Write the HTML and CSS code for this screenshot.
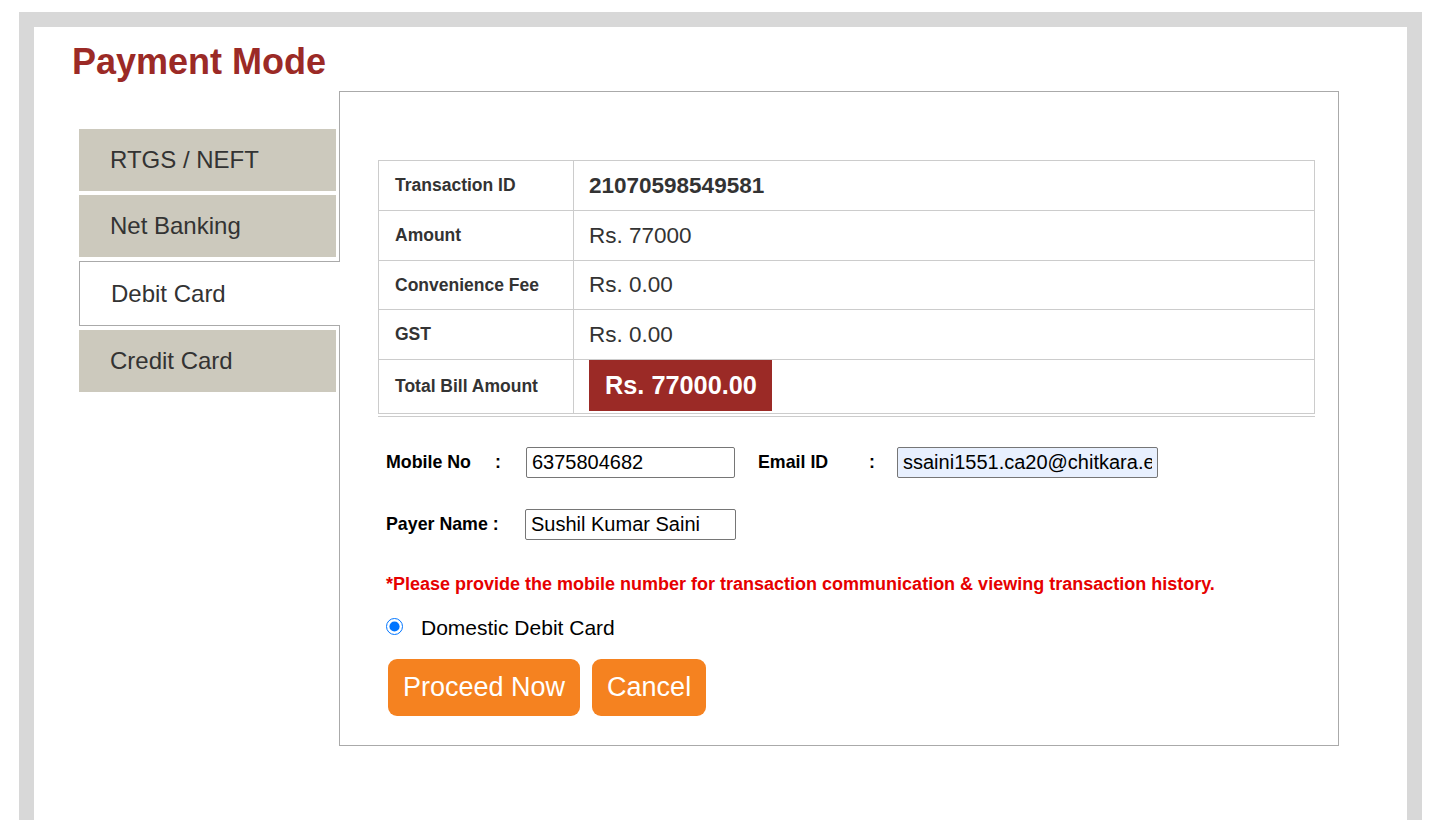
FILE: index.html
```html
<!DOCTYPE html>
<html>
<head>
<meta charset="utf-8">
<title>Payment Mode</title>
<link rel="stylesheet" href="styles.css">
</head>
<body>
<div class="page">
  <div class="frame">
    <h1 class="title">Payment Mode</h1>
    <div class="layout">
      <ul class="tabs">
        <li class="tab">RTGS / NEFT</li>
        <li class="tab">Net Banking</li>
        <li class="tab tab-active">Debit Card</li>
        <li class="tab">Credit Card</li>
      </ul>
      <div class="panel">
        <table class="bill">
          <tr class="r1"><td class="lbl">Transaction ID</td><td class="val val-bold">21070598549581</td></tr>
          <tr class="r2"><td class="lbl">Amount</td><td class="val">Rs. 77000</td></tr>
          <tr class="r3"><td class="lbl">Convenience Fee</td><td class="val">Rs. 0.00</td></tr>
          <tr class="r4"><td class="lbl">GST</td><td class="val">Rs. 0.00</td></tr>
          <tr class="r5"><td class="lbl">Total Bill Amount</td><td class="val val-total"><span class="total">Rs. 77000.00</span></td></tr>
        </table>
        <div class="form">
          <div class="frow">
            <span class="flabel w-mobile">Mobile No</span>
            <span class="colon w-c1">:</span>
            <input class="finput in-mobile" type="text" value="6375804682">
            <span class="flabel w-email">Email ID</span>
            <span class="colon w-c2">:</span>
            <input class="finput in-email" type="text" value="ssaini1551.ca20@chitkara.edu.in">
          </div>
          <div class="frow">
            <span class="flabel w-payer">Payer Name :</span>
            <input class="finput in-payer" type="text" value="Sushil Kumar Saini">
          </div>
          <p class="note">*Please provide the mobile number for transaction communication &amp; viewing transaction history.</p>
          <label class="radio-row"><input class="radio" type="radio" name="card" checked> <span>Domestic Debit Card</span></label>
          <div class="actions">
            <button class="btn" type="button">Proceed Now</button>
            <button class="btn" type="button">Cancel</button>
          </div>
        </div>
      </div>
    </div>
  </div>
</div>
</body>
</html>
```
FILE: styles.css
```css
html, body {
  margin: 0;
  padding: 0;
  background: #fff;
  overflow: hidden;
}
body {
  font-family: "Liberation Sans", Arial, sans-serif;
  color: #333;
}
.page {
  padding: 12px 18px 0 19px;
}
.frame {
  border: 15px solid #d8d8d8;
  border-bottom: 0;
  background: #fff;
  height: 808px;
  box-sizing: border-box;
  padding: 17px 0 0 38px;
}
.title {
  margin: 0;
  font-size: 36px;
  line-height: 36px;
  font-weight: bold;
  color: #9b2a26;
}
.layout {
  display: flex;
  margin-top: 11px;
  margin-left: 7px;
}
.tabs {
  list-style: none;
  margin: 0;
  padding: 38px 0 0 0;
  width: 260px;
  display: flex;
  flex-direction: column;
  gap: 4px;
}
.tab {
  width: 257px;
  height: 62px;
  box-sizing: border-box;
  background: #ccc9bd;
  color: #333;
  font-size: 24px;
  padding-left: 31px;
  display: flex;
  align-items: center;
}
.tab-active {
  background: #fff;
  width: 261px;
  height: 65px;
  border: 1px solid #aaa;
  border-right: 0;
  padding-left: 31px;
  position: relative;
  z-index: 1;
  margin-right: -1px;
}
.panel {
  width: 1000px;
  box-sizing: border-box;
  border: 1px solid #aaa;
  padding: 68px 23px 29px 38px;
  background: #fff;
}
.bill {
  width: 100%;
  border-collapse: collapse;
  border-bottom: 4px double #ccc;
}
.bill td {
  border: 1px solid #ccc;
  padding: 0;
  vertical-align: middle;
}
.r1 td, .r2 td, .r4 td { height: 49px; }
.r3 td { height: 48px; }
.r5 td { height: 53px; }
.lbl {
  width: 178px;
  padding-left: 16px !important;
  font-size: 17.5px;
  font-weight: bold;
  color: #333;
}
.val {
  padding-left: 15px !important;
  font-size: 22.5px;
  color: #333;
}
.val-bold {
  font-weight: bold;
}
.val-total {
  vertical-align: top !important;
}
.total {
  display: inline-block;
  background: #9b2a26;
  color: #fff;
  font-weight: bold;
  font-size: 25.3px;
  height: 51px;
  line-height: 51px;
  padding: 0 15px 0 16px;
}
.form {
  padding-left: 8px;
  padding-top: 30px;
}
.frow {
  display: flex;
  align-items: center;
  height: 31px;
  margin-bottom: 31px;
}
.flabel, .colon {
  font-size: 17.8px;
  font-weight: bold;
  color: #000;
}
.w-mobile { width: 109px; }
.w-c1 { width: 31px; }
.w-email { width: 111px; margin-left: 23px; }
.w-c2 { width: 28px; }
.w-payer { width: 139px; }
.finput {
  height: 31px;
  box-sizing: border-box;
  border: 1px solid #767676;
  border-radius: 2px;
  padding: 0 5px;
  font-family: "Liberation Sans", Arial, sans-serif;
  font-size: 20px;
  color: #000;
  background: #fff;
  margin: 0;
}
.in-mobile { width: 209px; }
.in-email { width: 261px; background: #e8f0fe; }
.in-payer { width: 211px; }
.note {
  margin: 0;
  padding-top: 3px;
  font-size: 18px;
  line-height: 20px;
  font-weight: bold;
  color: #e60000;
}
.radio-row {
  display: flex;
  align-items: center;
  margin-top: 22px;
  height: 24px;
  font-size: 21px;
  color: #000;
}
.radio {
  width: 17px;
  height: 17px;
  margin: -4px 18px 0 0;
  accent-color: #0075ff;
}
.actions {
  display: flex;
  gap: 12px;
  margin-top: 19px;
  padding-left: 2px;
}
.btn {
  height: 57px;
  border: 0;
  border-radius: 9px;
  background: #f58220;
  color: #fff;
  font-family: "Liberation Sans", Arial, sans-serif;
  font-size: 27px;
  padding: 0 15px;
  cursor: pointer;
}
```
